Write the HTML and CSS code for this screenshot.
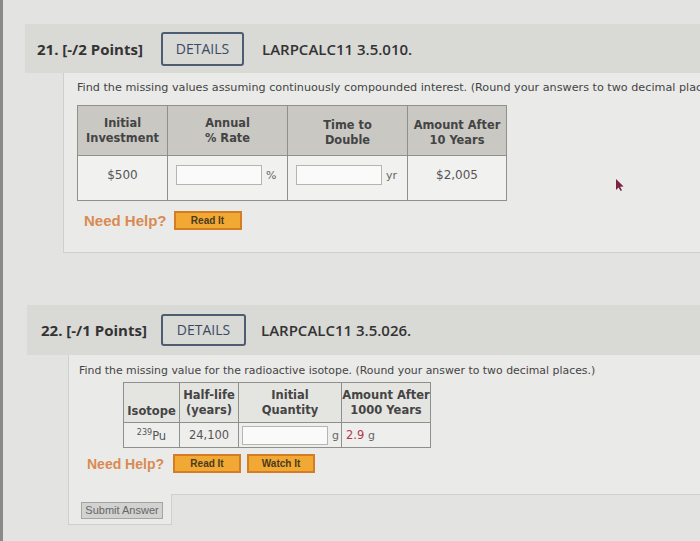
FILE: index.html
```html
<!DOCTYPE html>
<html>
	<head>
		<meta charset="UTF-8">
		<title>WebAssign</title>
		<link rel="stylesheet" href="styles.css">
	</head>
	<body>
		<div class="page">
			<!-- question 21 -->
			<div class="qhead q1head">
				<span class="qnum">21. [-/2 Points]</span>
				<span class="details">DETAILS</span>
				<span class="code">LARPCALC11 3.5.010.</span>
			</div>
			<div class="qbody q1body">
				<p class="prompt">Find the missing values assuming continuously compounded interest. (Round your answers to two decimal places.)</p>
				<table class="grid g1">
					<tr>
						<th class="c1">Initial<br>Investment</th>
						<th class="c2">Annual<br>% Rate</th>
						<th class="c3">Time to<br>Double</th>
						<th class="c4">Amount After<br>10 Years</th>
					</tr>
					<tr>
						<td class="red">$500</td>
						<td class="inp"><span class="box"></span><span class="unit">%</span></td>
						<td class="inp"><span class="box"></span><span class="unit">yr</span></td>
						<td class="red">$2,005</td>
					</tr>
				</table>
				<div class="help">
					<span class="needhelp">Need Help?</span>
					<a href="javascript:;" class="hbtn">Read It</a>
				</div>
			</div>
			<svg class="cursor" width="10" height="14" viewBox="0 0 10 14"><path d="M1 1 L1 12 L3.6 9.4 L5.6 13 L7 12.3 L5.1 8.8 L8.6 8.6 Z" fill="#7a2344"/></svg>

			<!-- question 22 -->
			<div class="qhead q2head">
				<span class="qnum">22. [-/1 Points]</span>
				<span class="details">DETAILS</span>
				<span class="code">LARPCALC11 3.5.026.</span>
			</div>
			<div class="qbody q2body">
				<p class="prompt p2">Find the missing value for the radioactive isotope. (Round your answer to two decimal places.)</p>
				<table class="grid g2">
					<tr>
						<th class="d1"><br>Isotope</th>
						<th class="d2">Half-life<br>(years)</th>
						<th class="d3">Initial<br>Quantity</th>
						<th class="d4">Amount After<br>1000 Years</th>
					</tr>
					<tr>
						<td><sup>239</sup>Pu</td>
						<td>24,100</td>
						<td class="inp"><span class="box"></span><span class="unit">g</span></td>
						<td class="left"><span class="red">2.9</span> <span class="unit">g</span></td>
					</tr>
				</table>
				<div class="help help2">
					<span class="needhelp">Need Help?</span>
					<a href="javascript:;" class="hbtn">Read It</a>
					<a href="javascript:;" class="hbtn">Watch It</a>
				</div>
			</div>
			<div class="submitbox">
				<a href="javascript:;" class="submit">Submit Answer</a>
			</div>
		</div>
	</body>
</html>
```

FILE: styles.css
```css
*{
	margin: 0;
	padding: 0;
}
html,body{
	height: 100%;
}
body{
	background: #e3e3e1;
	overflow: hidden;
	font-family: "DejaVu Sans", Verdana, sans-serif;
	color: #444;
}
.page{
	position: relative;
	height: 541px;
	padding-top: 24px;
	border-left: 3px solid #8a8a88;
	box-sizing: border-box;
}
.qhead{
	display: flex;
	align-items: center;
	background: #d9d9d6;
	font-family: "Open Sans", sans-serif;
	color: #333;
}
.q1head{
	margin: 0 0 0 22px;
	height: 49px;
	padding-left: 12px;
}
.q2head{
	margin: 0 0 0 24px;
	height: 50px;
	padding-left: 14px;
}
.qnum{
	font-weight: 700;
	font-size: 15px;
	width: 124px;
}
.q2head .qnum{
	width: 120px;
}
.details{
	display: block;
	width: 79px;
	height: 30px;
	line-height: 30px;
	border: 2px solid #4f5d73;
	border-radius: 3px;
	text-align: center;
	font-size: 14px;
	color: #3b4a62;
}
.q2head .details{
	width: 81px;
	height: 28px;
	line-height: 28px;
}
.code{
	margin-left: 18px;
	font-size: 15px;
	font-weight: 600;
}
.q2head .code{
	margin-left: 15px;
}
.qbody{
	background: #eaeae8;
	border-left: 1px solid #cfcfcc;
	border-bottom: 1px solid #cfcfcc;
}
.q1body{
	margin-left: 60px;
	height: 180px;
	padding: 8px 0 0 13px;
	box-sizing: border-box;
	margin-bottom: 52px;
}
.q2body{
	margin-left: 65px;
	height: 140px;
	padding: 9px 0 0 10px;
	box-sizing: border-box;
}
.prompt{
	font-size: 11.2px;
	white-space: nowrap;
	overflow: hidden;
	color: #444;
}
.p2{
	font-size: 10.9px;
}
.grid{
	border-collapse: collapse;
	background: #f1f1ef;
	margin-top: 11px;
}
.grid th{
	background: #c9c8c3;
	font-size: 11.4px;
	font-weight: bold;
	color: #444;
	border: 1px solid #8f8f8c;
	line-height: 15px;
}
.grid td{
	border: 1px solid #8f8f8c;
	text-align: center;
	font-size: 12px;
	color: #555;
}
.g1 th{
	height: 45px;
}
.g1 td{
	height: 38px;
	padding-bottom: 6px;
}
.c1{ width: 89px; }
.c2{ width: 119px; }
.c3{ width: 119px; }
.c4{ width: 98px; }
.g1 .c3, .g1 .c4{
	padding-top: 4px;
}
.red{
	color: #b3394f;
}
.grid td.inp{
	text-align: left;
	padding-left: 8px;
	white-space: nowrap;
}
.box{
	display: inline-block;
	vertical-align: middle;
	width: 84px;
	height: 18px;
	background: #fafafa;
	border: 1px solid #b5b5b2;
}
.unit{
	display: inline-block;
	vertical-align: middle;
	margin-left: 4px;
	font-size: 11px;
	color: #666;
}
.help{
	display: flex;
	align-items: center;
	margin: 10px 0 0 7px;
}
.needhelp{
	font-family: "Liberation Sans", Arial, sans-serif;
	font-weight: bold;
	font-size: 15px;
	color: #d98a52;
	margin-right: 7px;
}
.hbtn{
	display: block;
	width: 64px;
	height: 15px;
	line-height: 15px;
	background: #f1a933;
	border: 2px solid #d47d24;
	text-decoration: none;
	text-align: center;
	font-family: "Liberation Sans", Arial, sans-serif;
	font-weight: bold;
	font-size: 10px;
	color: #4a3a20;
	margin-right: 6px;
}
.g2{
	margin: 5px 0 0 44px;
	background: #eeeeec;
}
.g2 th{
	background: #e4e4e1;
	height: 36px;
	font-size: 11.5px;
	color: #444;
}
.g2 td{
	height: 24px;
	font-size: 11.5px;
}
.d1{ width: 55px; vertical-align: bottom; padding-bottom: 3px; }
.d2{ width: 58px; }
.d3{ width: 102px; }
.d4{ width: 88px; }
.g2 td.inp{
	padding-left: 3px;
}
.g2 .box{
	height: 17px;
}
.g2 td.left{
	text-align: left;
	padding-left: 4px;
}
.g2 td.left .unit{
	margin-left: 0;
}
sup{
	font-size: 8px;
}
.help2{
	margin: 6px 0 0 8px;
}
.help2 .needhelp{
	font-size: 14px;
	margin-right: 9px;
}
.help2 .hbtn{
	margin-right: 6px;
}
.submitbox{
	margin-left: 65px;
	width: 104px;
	height: 31px;
	background: #eaeae8;
	border-left: 1px solid #cfcfcc;
	border-right: 1px solid #cfcfcc;
	border-bottom: 1px solid #cfcfcc;
	margin-top: -1px;
	padding: 8px 0 0 12px;
	box-sizing: border-box;
}
.submit{
	display: block;
	width: 80px;
	height: 15px;
	line-height: 15px;
	background: #d2d2d0;
	border: 1px solid #a5a5a3;
	text-decoration: none;
	text-align: center;
	font-family: "Liberation Sans", Arial, sans-serif;
	font-size: 11px;
	color: #666;
}
.cursor{
	position: absolute;
	left: 612px;
	top: 178px;
}
```
